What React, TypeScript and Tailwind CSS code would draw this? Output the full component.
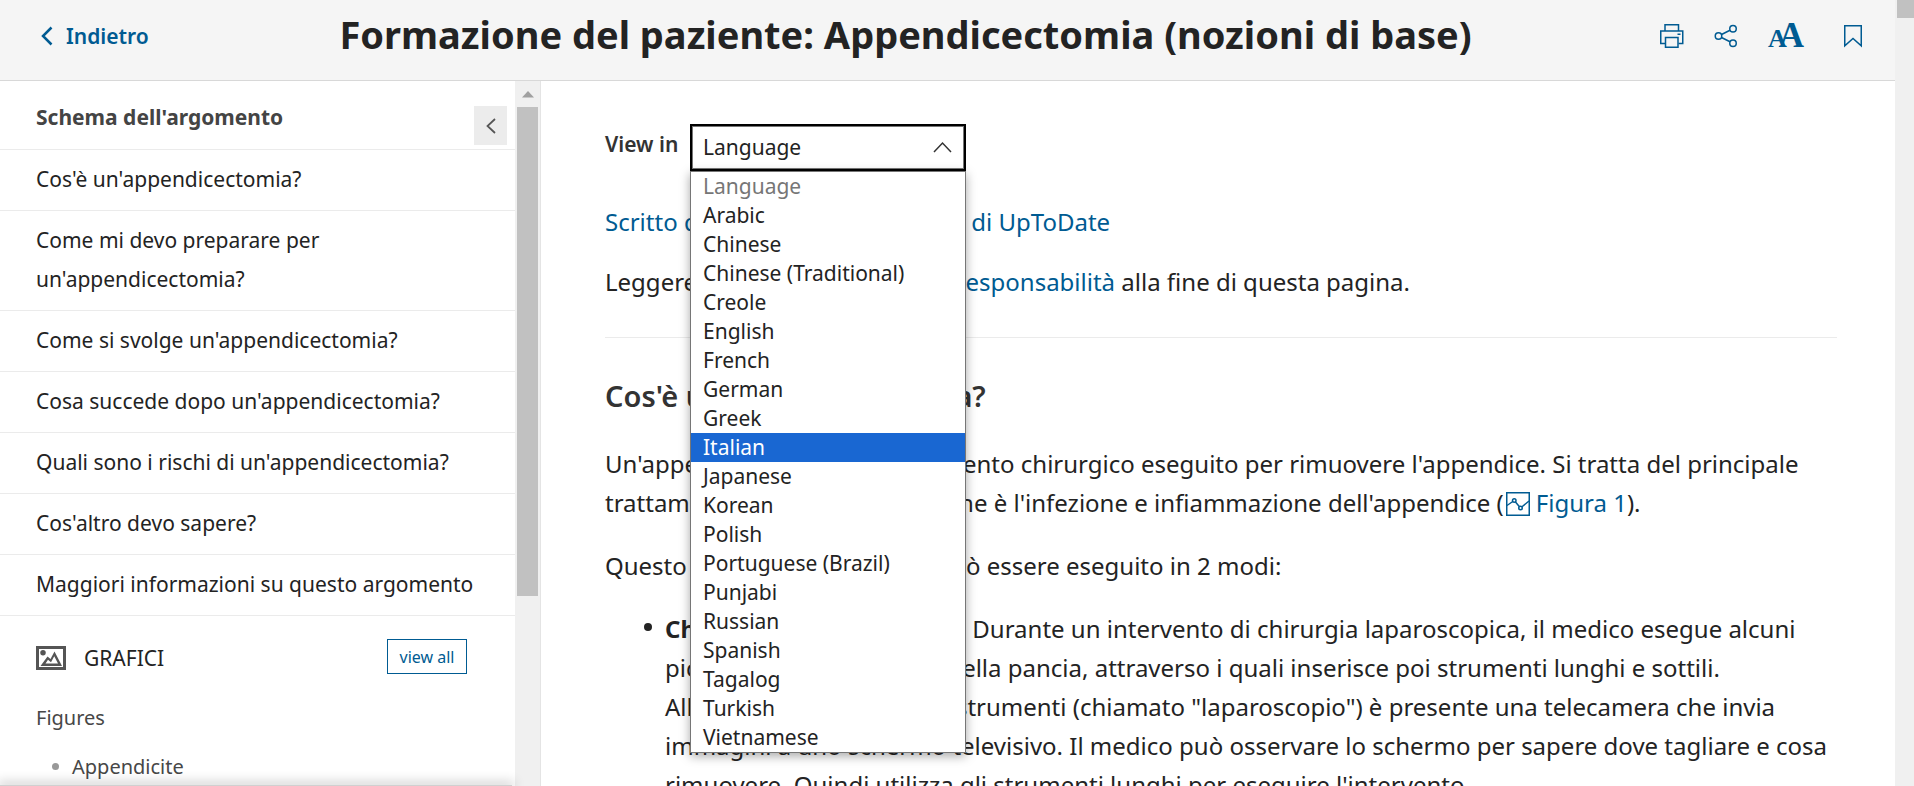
import React from "react";

const languages = [
  "Language",
  "Arabic",
  "Chinese",
  "Chinese (Traditional)",
  "Creole",
  "English",
  "French",
  "German",
  "Greek",
  "Italian",
  "Japanese",
  "Korean",
  "Polish",
  "Portuguese (Brazil)",
  "Punjabi",
  "Russian",
  "Spanish",
  "Tagalog",
  "Turkish",
  "Vietnamese",
];

const topics = [
  "Cos'è un'appendicectomia?",
  "Come mi devo preparare per un'appendicectomia?",
  "Come si svolge un'appendicectomia?",
  "Cosa succede dopo un'appendicectomia?",
  "Quali sono i rischi di un'appendicectomia?",
  "Cos'altro devo sapere?",
  "Maggiori informazioni su questo argomento",
];

function PrintIcon() {
  return (
    <svg width="26" height="26" viewBox="0 0 26 26" fill="none" stroke="currentColor" strokeWidth="1.5" aria-hidden="true">
      <path d="M6 8V1.75h13.5V8M6 20.5H1.75V8h22v12.500H19.500" />
      <path d="M6.500 14.500h12.500v9.750H6.500z" />
      <path d="M18.500 11.250h3" />
    </svg>
  );
}

function ShareIcon() {
  return (
    <svg width="24" height="24" viewBox="0 0 24 24" fill="none" stroke="currentColor" strokeWidth="1.500" aria-hidden="true">
      <circle cx="4.500" cy="12" r="3.250" />
      <circle cx="19" cy="4.750" r="3.250" />
      <circle cx="19" cy="19.250" r="3.250" />
      <path d="M7.500 10.500 16 6.250M7.500 13.500l8.500 4.250" />
    </svg>
  );
}

function BookmarkIcon() {
  return (
    <svg width="20" height="24" viewBox="0 0 20 24" fill="none" stroke="currentColor" strokeWidth="1.500" aria-hidden="true">
      <path d="M1.750 1.750h16.500v20L10 14.500l-8.250 7.250z" />
    </svg>
  );
}

function PictureIcon() {
  return (
    <svg width="30" height="24" viewBox="0 0 30 24" fill="#555555" aria-hidden="true">
      <path fillRule="evenodd" d="M0 0h30v24H0zM3 3v18h24V3z" />
      <circle cx="7" cy="6.750" r="2.750" />
      <path fillRule="evenodd" d="M4.500 20 11.500 10.500l3 2.500L18.500 5.500 26 20zM9.500 17.500h12.500l-3.750-7.250-3.250 6-3-2.500z" />
    </svg>
  );
}

function FigureIcon() {
  return (
    <svg className="mr-[6px] ml-[2px] inline-block align-[-4px]" width="24" height="24" viewBox="0 0 24 24" fill="none" stroke="currentColor" strokeWidth="1.500" aria-hidden="true">
      <path d="M.75.75h22.500v22.500H.75z" />
      <circle cx="8.250" cy="8.500" r="1.750" />
      <circle cx="14.500" cy="16" r="1.750" />
      <path d="M1 13.500l5.750-4M9.500 10l3.750 4.500M16 14.750 23 9" />
    </svg>
  );
}

const link = "text-[#005b92]";

export default function App() {
  return (
    <div className="flex h-screen overflow-hidden bg-white font-['Noto_Sans',sans-serif] text-[#232323]">
      <div className="flex min-w-0 flex-1 flex-col">
        <header className="flex h-[81px] shrink-0 items-start border-b border-[#d8d8d8] bg-[#f5f5f5] pr-8 pl-10">
          <a href="#indietro" className={`mt-4 flex w-[176px] shrink-0 items-center gap-3 text-[21px] leading-10 font-semibold ${link}`}>
            <svg width="14" height="20" viewBox="0 0 14 20" fill="none" stroke="currentColor" strokeWidth="2.500" aria-hidden="true">
              <path d="M11.500 1.500 3 10l8.500 8.500" />
            </svg>
            Indietro
          </a>
          <h1 className="mt-[7px] flex-1 text-center text-[38px] leading-[54px] font-bold whitespace-nowrap">
            Formazione del paziente: Appendicectomia (nozioni di base)
          </h1>
          <div className={`mt-[16px] flex h-10 w-[268px] shrink-0 items-center justify-end ${link}`}>
            <button type="button" aria-label="Stampa" className="mr-[29px]"><PrintIcon /></button>
            <button type="button" aria-label="Condividi" className="mr-[30px]"><ShareIcon /></button>
            <button type="button" aria-label="Dimensione testo" className="mr-[39px] flex items-baseline pt-[2px] font-['Liberation_Serif',serif] leading-10 font-bold">
              <span className="text-[26px]">A</span>
              <span className="-ml-2 text-[35px]">A</span>
            </button>
            <button type="button" aria-label="Segnalibro"><BookmarkIcon /></button>
          </div>
        </header>

        <div className="flex min-h-0 flex-1">
          <aside className="relative flex w-[541px] shrink-0">
            <div className="min-w-0 flex-1 overflow-hidden">
              <div className="flex h-[69px] justify-between border-b border-[#ebebeb] pr-2 pl-9">
                <h2 className="mt-4 text-[21px] leading-10 font-bold text-[#444444]">Schema dell'argomento</h2>
                <button type="button" aria-label="Comprimi" className="mt-[25px] flex h-[39px] w-[33px] items-center justify-center bg-[#ececec] text-[#555555]">
                  <svg width="12" height="18" viewBox="0 0 12 18" fill="none" stroke="currentColor" strokeWidth="1.750" aria-hidden="true">
                    <path d="M10 2 2.500 9l7.500 7" />
                  </svg>
                </button>
              </div>
              <nav>
                {topics.map((topic) => (
                  <a key={topic} href="#argomento" className="block border-b border-[#ebebeb] pt-[10px] pr-9 pb-[11px] pl-9 text-[21px] leading-[39px]">
                    {topic}
                  </a>
                ))}
              </nav>
              <div className="flex items-start pt-[23px] pr-12 pl-9">
                <span className="mt-[7px]"><PictureIcon /></span>
                <h3 className="ml-[18px] flex-1 text-[21px] leading-[39px]">GRAFICI</h3>
                <button type="button" className={`h-[35px] w-20 border border-[#005b92] bg-white text-[16px] ${link}`}>view all</button>
              </div>
              <div className="px-9 text-[20px] leading-[39px] text-[#474747]">
                <h4 className="mt-5">Figures</h4>
                <ul className="mt-[10px]">
                  <li className="flex items-center gap-[13px] pl-4">
                    <span className="size-[7px] rounded-full bg-[#999999]" />
                    Appendicite
                  </li>
                </ul>
              </div>
            </div>
            <div className="flex w-[26px] shrink-0 flex-col border-r border-[#e4e4e4] bg-[#f0f0f0] pr-[2px] pl-[2px]" aria-hidden="true">
              <svg className="mx-auto mt-[10px] mb-[9px]" width="12" height="7" viewBox="0 0 12 7" fill="#a0a0a0">
                <path d="M6 0 12 6.500H0z" />
              </svg>
              <div className="h-[489px] bg-[#c1c1c1]" />
            </div>
            <div className="absolute bottom-0 left-0 h-px w-[512px] bg-[#d0d0d0] shadow-[0_0_12px_2px_rgba(0,0,0,0.3)]" />
          </aside>

          <main className="min-w-0 flex-1 overflow-hidden pt-[43px] pr-[58px] pl-16 text-[24px] leading-[39px]">
            <div className="flex">
              <label htmlFor="language" className="w-[85px] pt-px text-[21px] font-semibold text-[#333333]">View in</label>
              <div className="relative w-[276px]">
                <select id="language" defaultValue="Language" className="block h-[47px] w-full appearance-none border-2 border-black bg-white px-[11px] pb-[2px] text-[21px] leading-7 inset-ring inset-ring-[#767676]">
                  {languages.map((name) => (
                    <option key={name}>{name}</option>
                  ))}
                </select>
                <svg className="pointer-events-none absolute top-[17px] right-[14px]" width="19" height="12" viewBox="0 0 19 12" fill="none" stroke="#333333" strokeWidth="1.500" aria-hidden="true">
                  <path d="M1 11 9.500 2l8.500 9" />
                </svg>
                <ul role="listbox" aria-label="Language" className="absolute top-full left-0 z-10 w-full border border-[#767676] bg-white text-[21px] leading-[29px] shadow-[0_3px_10px_rgba(0,0,0,0.35)]">
                  {languages.map((name) => (
                    <li
                      key={name}
                      role="option"
                      aria-selected={name === "Italian"}
                      className="px-3 first:text-[#767676] aria-selected:bg-[#1967d2] aria-selected:text-white"
                    >
                      {name}
                    </li>
                  ))}
                </ul>
              </div>
            </div>

            <p className="mt-[31px]"><a href="#autori" className={link}>Scritto dai medici e dai redattori di UpToDate</a></p>
            <p className="mt-[21px] border-b border-[#ebebeb] pb-9">
              Leggere le <a href="#clausola" className={link}>dichiarazioni di non responsabilità</a> alla fine di questa pagina.
            </p>
            <h2 className="mt-[38px] text-[29px] font-semibold text-[#333333]">Cos'è un'appendicectomia?</h2>
            <p className="mt-[29px]">
              Un'appendicectomia è un intervento chirurgico eseguito per rimuovere l'appendice. Si tratta del principale trattamento per l'appendicite, che è l'infezione e infiammazione dell'appendice (<a href="#figura-1" className={link}><FigureIcon />Figura 1</a>).
            </p>
            <p className="mt-6">Questo intervento chirurgico può essere eseguito in 2 modi:</p>
            <ul className="mt-6">
              <li className="flex pl-[39px]">
                <span className="mt-[14px] mr-[13px] size-2 shrink-0 rounded-full bg-[#232323]" />
                <p>
                  <b>Chirurgia laparoscopica</b> – Durante un intervento di chirurgia laparoscopica, il medico esegue alcuni piccoli taglietti (incisioni) nella pancia, attraverso i quali inserisce poi strumenti lunghi e sottili. All'estremità di uno di tali strumenti (chiamato "laparoscopio") è presente una telecamera che invia immagini a uno schermo televisivo. Il medico può osservare lo schermo per sapere dove tagliare e cosa rimuovere. Quindi utilizza gli strumenti lunghi per eseguire l'intervento.
                </p>
              </li>
            </ul>
          </main>
        </div>
      </div>
      <div className="w-[19px] shrink-0 bg-[#f0f0f0] pl-[2px]" aria-hidden="true">
        <div className="h-[18px] bg-[#c1c1c1]" />
      </div>
    </div>
  );
}
